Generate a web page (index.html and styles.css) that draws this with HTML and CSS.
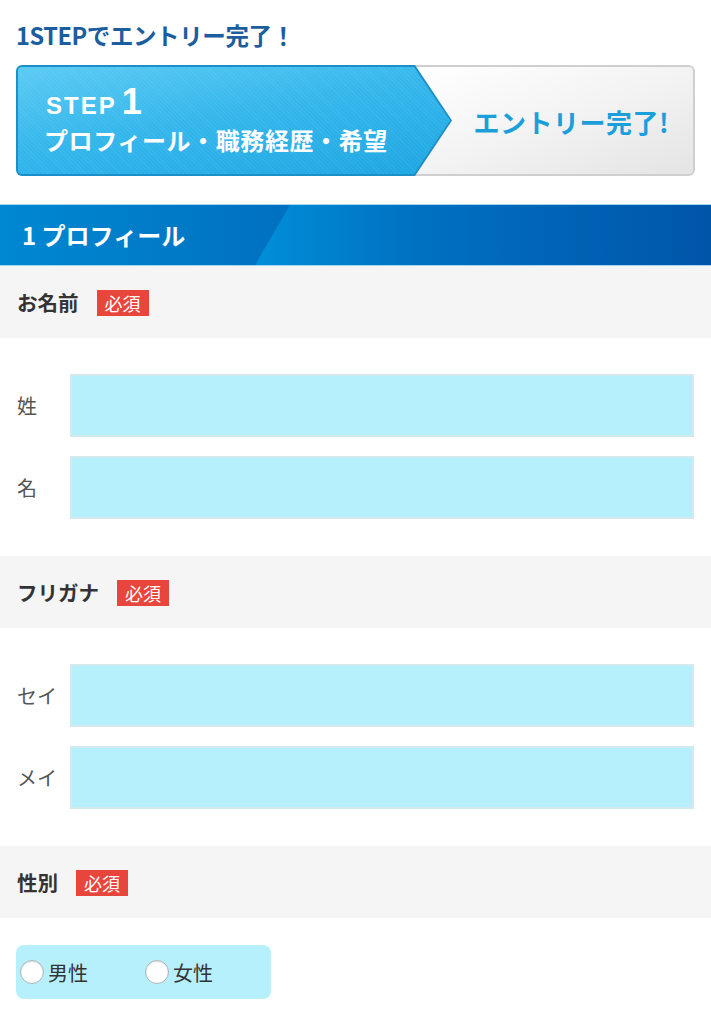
FILE: index.html
```html
<!DOCTYPE html>
<html lang="ja">
<head>
<meta charset="utf-8">
<title>エントリー</title>
<link rel="stylesheet" href="styles.css">
</head>
<body>
<div class="page">
  <h1 class="lead">1STEPでエントリー完了！</h1>
  <div class="steps">
    <div class="step-cur">
      <div class="step-cur-in">
        <div class="step-no"><span class="step-word">STEP</span><span class="step-num">1</span></div>
        <div class="step-desc">プロフィール・職務経歴・希望</div>
      </div>
    </div>
    <div class="step-next"><span>エントリー完了!</span></div>
  </div>

  <h2 class="sec-head"><span>1 プロフィール</span></h2>

  <div class="q-head"><span class="q-title">お名前</span><span class="req">必須</span></div>
  <div class="q-body">
    <div class="row"><span class="row-label">姓</span><div class="field"></div></div>
    <div class="row"><span class="row-label">名</span><div class="field"></div></div>
  </div>

  <div class="q-head"><span class="q-title">フリガナ</span><span class="req">必須</span></div>
  <div class="q-body">
    <div class="row"><span class="row-label">セイ</span><div class="field"></div></div>
    <div class="row"><span class="row-label">メイ</span><div class="field"></div></div>
  </div>

  <div class="q-head"><span class="q-title">性別</span><span class="req">必須</span></div>
  <div class="q-body q-body-radio">
    <div class="radios">
      <label class="radio"><input type="radio" name="sex"><span>男性</span></label>
      <label class="radio"><input type="radio" name="sex"><span>女性</span></label>
    </div>
  </div>
</div>
</body>
</html>
```

FILE: styles.css
```css
* { box-sizing: border-box; }
html, body { margin: 0; padding: 0; background: #fff; }
body { font-family: "Noto Sans CJK JP", "Noto Sans", sans-serif; color: #333; }

.lead {
  margin: 0;
  padding: 20px 16px 0;
  height: 52px;
  font-size: 23.5px;
  line-height: 30px;
  font-weight: 700;
  color: #1b5d9d;
  letter-spacing: -0.4px;
}

.steps {
  margin: 13px 16px 0;
  height: 111px;
  display: grid;
  grid-template-columns: 399px 37px 1fr;
  grid-template-rows: 1fr;
  border-radius: 6px;
  overflow: hidden;
}
.step-cur {
  grid-column: 1 / 3;
  grid-row: 1;
  z-index: 2;
  background: #1a8fc8;
  padding: 2px;
  clip-path: polygon(0 0, 399px 0, 100% 50%, 399px 100%, 0 100%);
}
.step-cur-in {
  height: 100%;
  clip-path: polygon(0 0, 396px 0, 100% 50%, 396px 100%, 0 100%);
  background:
    repeating-linear-gradient(45deg, rgba(255,255,255,0.05) 0 1px, rgba(255,255,255,0) 1px 3px),
    linear-gradient(170deg, #5ccbf3 0%, #35b7ec 45%, #1ea6e2 100%);
  display: flex;
  flex-direction: column;
  justify-content: center;
  padding: 0 0 4px 28px;
  color: #fff;
  border-radius: 4px 0 0 4px;
}
.step-no {
  display: flex;
  align-items: baseline;
  line-height: 36px;
  height: 36px;
}
.step-word { font-size: 24px; line-height: 36px; font-weight: 700; letter-spacing: 2px; font-family: "Liberation Sans", Arial, sans-serif; }
.step-num { font-size: 36px; line-height: 36px; font-weight: 700; margin-left: 5px; font-family: "Liberation Sans", Arial, sans-serif; }
.step-desc {
  font-size: 24px;
  font-weight: 700;
  line-height: 28px;
  height: 28px;
  letter-spacing: 0.6px;
  margin-left: -2px;
  margin-top: 6px;
}

.step-next {
  grid-column: 2 / 4;
  grid-row: 1;
  border: 2px solid #cfcfcf;
  border-left: none;
  border-radius: 0 6px 6px 0;
  background: linear-gradient(160deg, #ffffff 0%, #f3f3f3 50%, #e4e4e4 100%);
  display: flex;
  align-items: center;
  justify-content: flex-end;
  padding-right: 24px;
}
.step-next span {
  font-size: 26px;
  font-weight: 700;
  color: #1b9fdb;
  letter-spacing: 0.5px;
  margin-top: 2px;
}

.sec-head {
  margin: 28px 0 0;
  height: 62px;
  border-top: 1px solid #9fd6f2;
  border-bottom: 1px solid #9fd6f2;
  background: linear-gradient(to right, #0088d2 0%, #0072c0 36%, #008ed8 36.1%, #0070c0 60%, #0055a9 100%);
  position: relative;
  display: flex;
  align-items: center;
  padding-left: 22px;
  font-size: 24px;
  font-weight: 700;
  color: #fff;
  line-height: 1;
  overflow: hidden;
}
.sec-head::before {
  content: "";
  position: absolute;
  top: 0; bottom: 0; left: 0;
  width: 290px;
  background: linear-gradient(to right, #0088d2 0%, #0070bf 100%);
  clip-path: polygon(0 0, 100% 0, 255px 100%, 0 100%);
}
.sec-head span { position: relative; }

.q-head {
  height: 72px;
  background: #f5f5f5;
  display: flex;
  align-items: center;
  padding-left: 17px;
}
.q-title { font-size: 20.5px; font-weight: 700; color: #333; }
.req {
  margin-left: 18px;
  background: #e8453c;
  color: #fff;
  font-size: 18px;
  line-height: 26px;
  height: 26px;
  padding: 0 8px;
  margin-top: 2px;
}

.q-body {
  padding: 36px 17px 37px 17px;
  display: flex;
  flex-direction: column;
  gap: 19px;
}
.row { display: flex; align-items: center; }
.row-label { width: 53px; font-size: 20px; color: #555; }
.field {
  flex: 1;
  height: 63px;
  background: #b7f0fd;
  border: 2px solid #d2e9ee;
}

.q-body-radio { padding: 27px 16px 27px; }
.radios {
  width: 255px;
  height: 54px;
  background: #b7f0fd;
  border-radius: 8px;
  display: flex;
  align-items: center;
  padding-left: 4px;
  gap: 57px;
}
.radio { display: flex; align-items: center; gap: 4px; font-size: 20px; color: #333; }
.radio input {
  -webkit-appearance: none;
  appearance: none;
  margin: 0;
  width: 24px;
  height: 24px;
  border-radius: 50%;
  background: #fff;
  border: 1px solid #a9b4b8;
  box-shadow: inset 0 1px 2px rgba(0,0,0,0.12);
}
```
